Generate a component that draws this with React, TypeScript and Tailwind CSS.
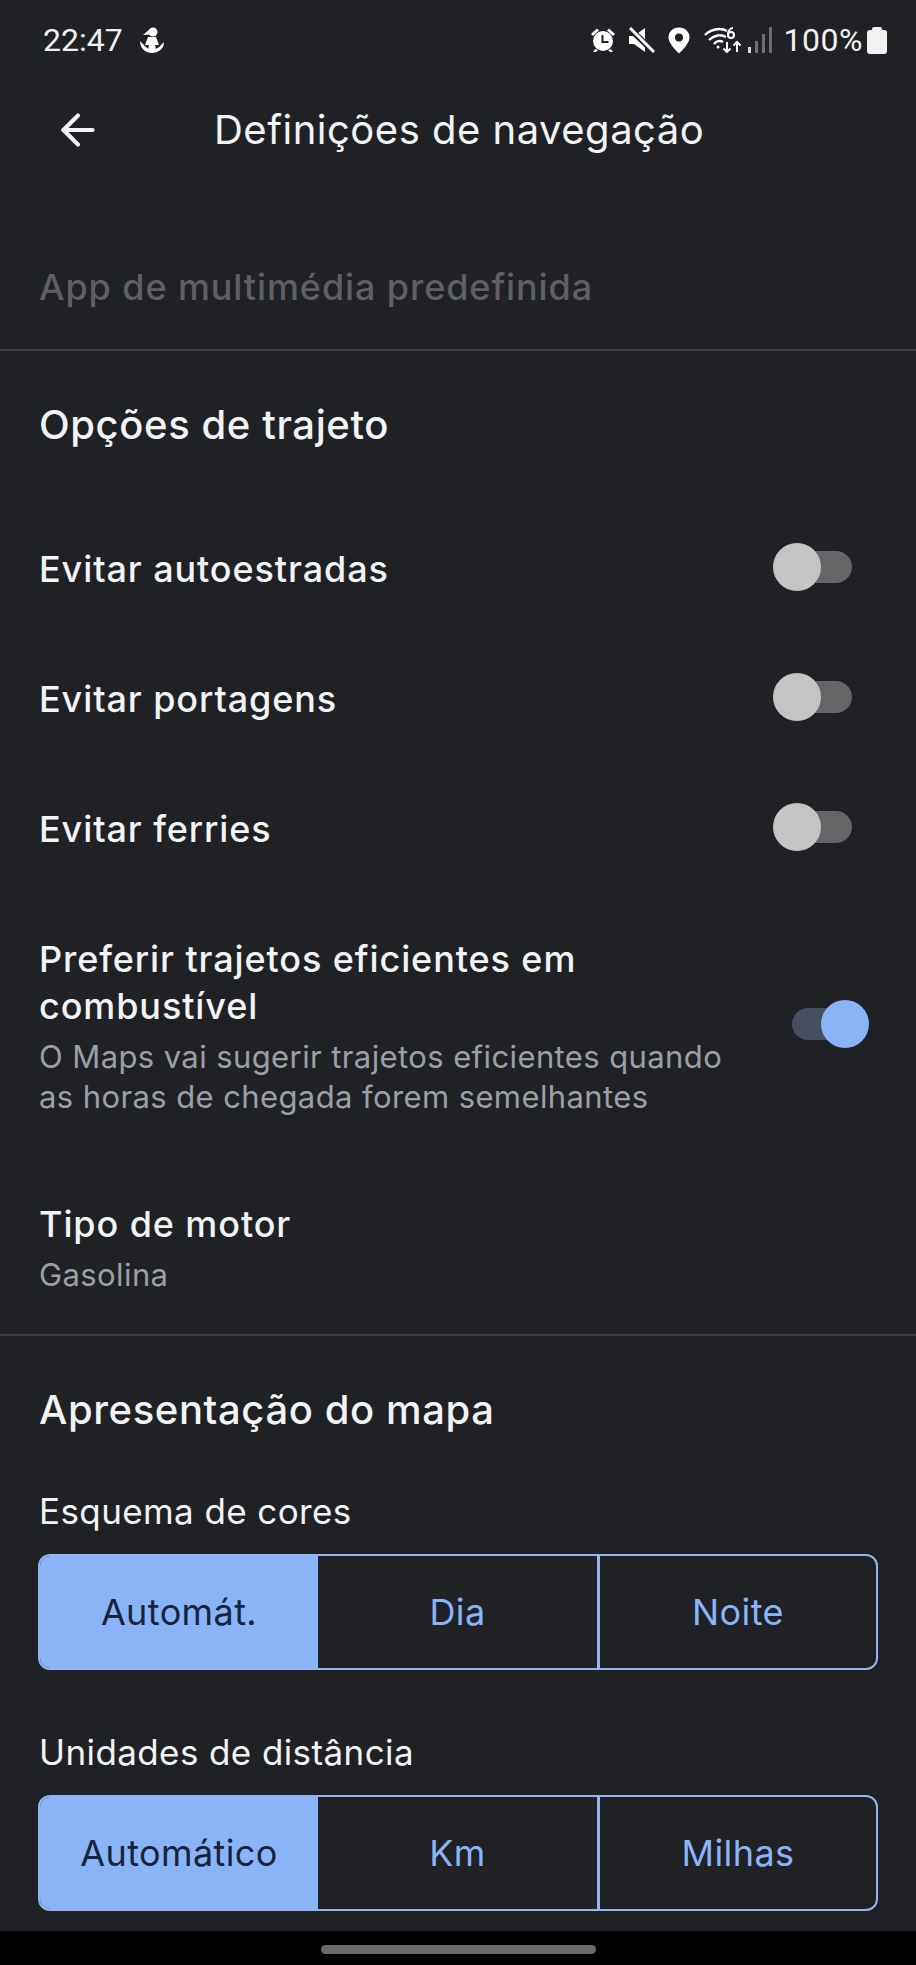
import { ArrowLeft } from 'lucide-react';

const font = "font-['Inter','Liberation_Sans',sans-serif]";

function AnchorGirl() {
    return (
        <svg width="26" height="27" viewBox="0 0 26 27" fill="#fff">
            <circle cx="14" cy="5" r="4.500" />
            <path d="M11 2 L4 8 L11 7.500z" />
            <path d="M9 10 h8 l3 8 h-14z" />
            <path d="M1 14 c0 8 6 12 12 12 s12 -4 12 -11 l-3 3 c-2 3 -5 4 -9 4 s-7 -2 -9 -5z" />
            <circle cx="13" cy="20" r="3.500" />
        </svg>
    );
}

function AlarmIcon() {
    return (
        <svg width="26" height="26" viewBox="0 0 26 26" fill="#fff">
            <circle cx="13" cy="14" r="10" />
            <path d="M1 7 L7 1.5 L9 3.5 L3 9z M25 7 L19 1.5 L17 3.5 L23 9z" />
            <path d="M5 22 L3 25 L6 25 L8 23z M21 22 L23 25 L20 25 L18 23z" />
            <path d="M12.5 8 v7 h6" fill="none" stroke="#202125" strokeWidth="2" />
        </svg>
    );
}

function MuteIcon() {
    return (
        <svg width="28" height="26" viewBox="0 0 28 26" fill="#fff">
            <path d="M1 9 h5 l11 -8 v24 l-11 -8 h-5z" />
            <path d="M1 1 L26 25" stroke="#202125" strokeWidth="6" />
            <path d="M2 1 L26 25" stroke="#fff" strokeWidth="3" />
        </svg>
    );
}

function PinIcon() {
    return (
        <svg width="22" height="27" viewBox="0 0 22 27">
            <path d="M11 0.5 C4.5 0.5 0.5 5 0.5 10.5 C0.5 17 11 26.5 11 26.5 S21.5 17 21.5 10.5 C21.5 5 17.5 0.5 11 0.5z" fill="#fff" />
            <circle cx="11" cy="10.5" r="4" fill="#202125" />
        </svg>
    );
}

function WifiIcon() {
    return (
        <svg width="38" height="26" viewBox="0 0 38 26" fill="none" stroke="#fff" strokeWidth="2.4">
            <path d="M1 8 C8 1 18 1 23 4" />
            <path d="M5 13 C10 8 17 7 22 10" />
            <path d="M10 17 C12 14 16 13 19 15" />
            <circle cx="14" cy="20" r="1.5" fill="#fff" stroke="none" />
            <circle cx="27" cy="8" r="3" strokeWidth="2" />
            <path d="M29 1 C26 1 24 4 24 8" strokeWidth="2" />
            <path d="M23 15 v10 M19.5 21.5 L23 25 L26.500 21.500" strokeWidth="2" />
            <path d="M33 25 v-10 M29.500 18.500 L33 15 L36.500 18.500" strokeWidth="2" />
        </svg>
    );
}

function SignalIcon() {
    return (
        <div className="flex items-end gap-[4px] h-[26px]">
            <div className="w-[3px] h-[6px] bg-[#d8d8d8]" />
            <div className="w-[3px] h-[12px] bg-[#6d6e70]" />
            <div className="w-[3px] h-[19px] bg-[#6d6e70]" />
            <div className="w-[3px] h-[26px] bg-[#6d6e70]" />
        </div>
    );
}

function StatusBar() {
    return (
        <div className="h-[80px] flex items-center justify-between pl-[43px] pr-[29px] shrink-0">
            <div className="flex items-center gap-[16px]">
                <span className="font-['Roboto',sans-serif] text-[32px] leading-none text-[#f1f1f1]">22:47</span>
                <AnchorGirl />
            </div>
            <div className="flex items-center">
                <AlarmIcon />
                <div className="ml-[12px]"><MuteIcon /></div>
                <div className="ml-[12px]"><PinIcon /></div>
                <div className="ml-[14px]"><WifiIcon /></div>
                <div className="ml-[6px]"><SignalIcon /></div>
                <span className="ml-[12px] font-['Roboto',sans-serif] text-[32px] leading-none tracking-[0.5px] text-[#f1f1f1]">100%</span>
                <div className="ml-[4px] relative w-[20px] h-[24px] mt-[3px] bg-[#f1f1f1] rounded-[3px]">
                    <div className="absolute -top-[3px] left-[5px] w-[10px] h-[4px] bg-[#f1f1f1] rounded-t-[2px]" />
                </div>
            </div>
        </div>
    );
}

function Toggle({ on = false }: { on?: boolean }) {
    if (on) {
        return (
            <div className="relative w-[77px] h-[48px] shrink-0">
                <div className="absolute left-0 top-[8px] w-[60px] h-[32px] rounded-full bg-[#464e5f]" />
                <div className="absolute right-0 top-0 w-[48px] h-[48px] rounded-full bg-[#8ab4f8]" />
            </div>
        );
    }
    return (
        <div className="relative w-[79px] h-[48px] shrink-0">
            <div className="absolute right-0 top-[8px] w-[60px] h-[32px] rounded-full bg-[#646567]" />
            <div className="absolute left-0 top-0 w-[48px] h-[48px] rounded-full bg-[#c4c4c4]" />
        </div>
    );
}

function ToggleRow({ label }: { label: string }) {
    return (
        <div className="h-[130px] flex items-center justify-between pl-[39px] pr-[64px]">
            <span className="text-[36px] font-medium text-[#f1f3f4] tracking-[0.9px]">{label}</span>
            <div className="-mt-[4px]"><Toggle /></div>
        </div>
    );
}

function Segmented({ options }: { options: string[] }) {
    return (
        <div className="ml-[38px] w-[840px] h-[116px] flex rounded-[12px] border-[2.5px] border-[#95b5ee] overflow-hidden">
            <div className="w-[278px] flex items-center justify-center bg-[#8ab4f8] text-[#17243c] text-[36px] tracking-[0.4px]">
                {options[0]}
            </div>
            <div className="w-[279px] flex items-center justify-center text-[#8ab4f8] text-[36px] tracking-[0.4px]">
                {options[1]}
            </div>
            <div className="flex-1 flex items-center justify-center text-[#8ab4f8] text-[36px] tracking-[0.4px] border-l-[3px] border-[#95b5ee]">
                {options[2]}
            </div>
        </div>
    );
}

export default function App() {
    return (
        <div className={`${font} w-[916px] h-[1965px] flex flex-col bg-[#202125] overflow-hidden`}>
            <StatusBar />

            {/* Header */}
            <div className="h-[100px] shrink-0 flex items-center">
                <ArrowLeft className="ml-[53px] w-[50px] h-[50px] text-[#f1f3f4]" strokeWidth={2} />
                <h1 className="ml-[111px] text-[40px] text-[#f1f3f4] tracking-[0.5px] whitespace-nowrap">Definições de navegação</h1>
            </div>

            <div className="mt-[45px] h-[126px] shrink-0 flex items-center pl-[39px] border-b-2 border-[#3c3d40]">
                <span className="text-[36px] font-medium text-[#5f6064] tracking-[0.9px]">App de multimédia predefinida</span>
            </div>

            {/* Opcoes de trajeto */}
            <div className="h-[148px] shrink-0 flex items-center pl-[39px] mb-[5px]">
                <h2 className="text-[40px] font-medium text-[#f1f3f4] tracking-[0.6px]">Opções de trajeto</h2>
            </div>
            <ToggleRow label="Evitar autoestradas" />
            <ToggleRow label="Evitar portagens" />
            <ToggleRow label="Evitar ferries" />

            <div className="flex items-center justify-between pl-[39px] pr-[47px] pt-[42px]">
                <div className="w-[700px]">
                    <div className="text-[36px] leading-[47px] font-medium text-[#f1f3f4] tracking-[0.9px]">
                        Preferir trajetos eficientes em combustível
                    </div>
                    <div className="mt-[7px] text-[31px] leading-[40px] text-[#9aa0a6] tracking-[0.4px]">
                        O Maps vai sugerir trajetos eficientes quando as horas de chegada forem semelhantes
                    </div>
                </div>
                <div className="-mt-[6px]"><Toggle on /></div>
            </div>

            <div className="mt-[82px] pl-[39px] pb-[39px] border-b-2 border-[#3c3d40]">
                <div className="text-[36px] leading-[50px] font-medium text-[#f1f3f4] tracking-[0.9px]">Tipo de motor</div>
                <div className="mt-[6px] text-[31px] leading-[40px] text-[#9aa0a6] tracking-[0.4px]">Gasolina</div>
            </div>

            {/* Apresentacao do mapa */}
            <div className="h-[148px] shrink-0 flex items-center pl-[39px]">
                <h2 className="text-[40px] font-medium text-[#f1f3f4] tracking-[0.6px]">Apresentação do mapa</h2>
            </div>
            <div className="h-[60px] -mt-[3px] shrink-0 flex items-center pl-[39px] text-[35px] text-[#f1f3f4] tracking-[0.4px]">Esquema de cores</div>
            <div className="mt-[13px]"><Segmented options={['Automát.', 'Dia', 'Noite']} /></div>
            <div className="mt-[52px] h-[60px] shrink-0 flex items-center pl-[39px] text-[35px] text-[#f1f3f4] tracking-[0.4px]">Unidades de distância</div>
            <div className="mt-[13px]"><Segmented options={['Automático', 'Km', 'Milhas']} /></div>

            {/* Nav bar */}
            <div className="mt-[20px] flex-1 bg-black flex justify-center pt-[14px]">
                <div className="w-[275px] h-[9px] rounded-full bg-[#6a6a6a]" />
            </div>
        </div>
    );
}
